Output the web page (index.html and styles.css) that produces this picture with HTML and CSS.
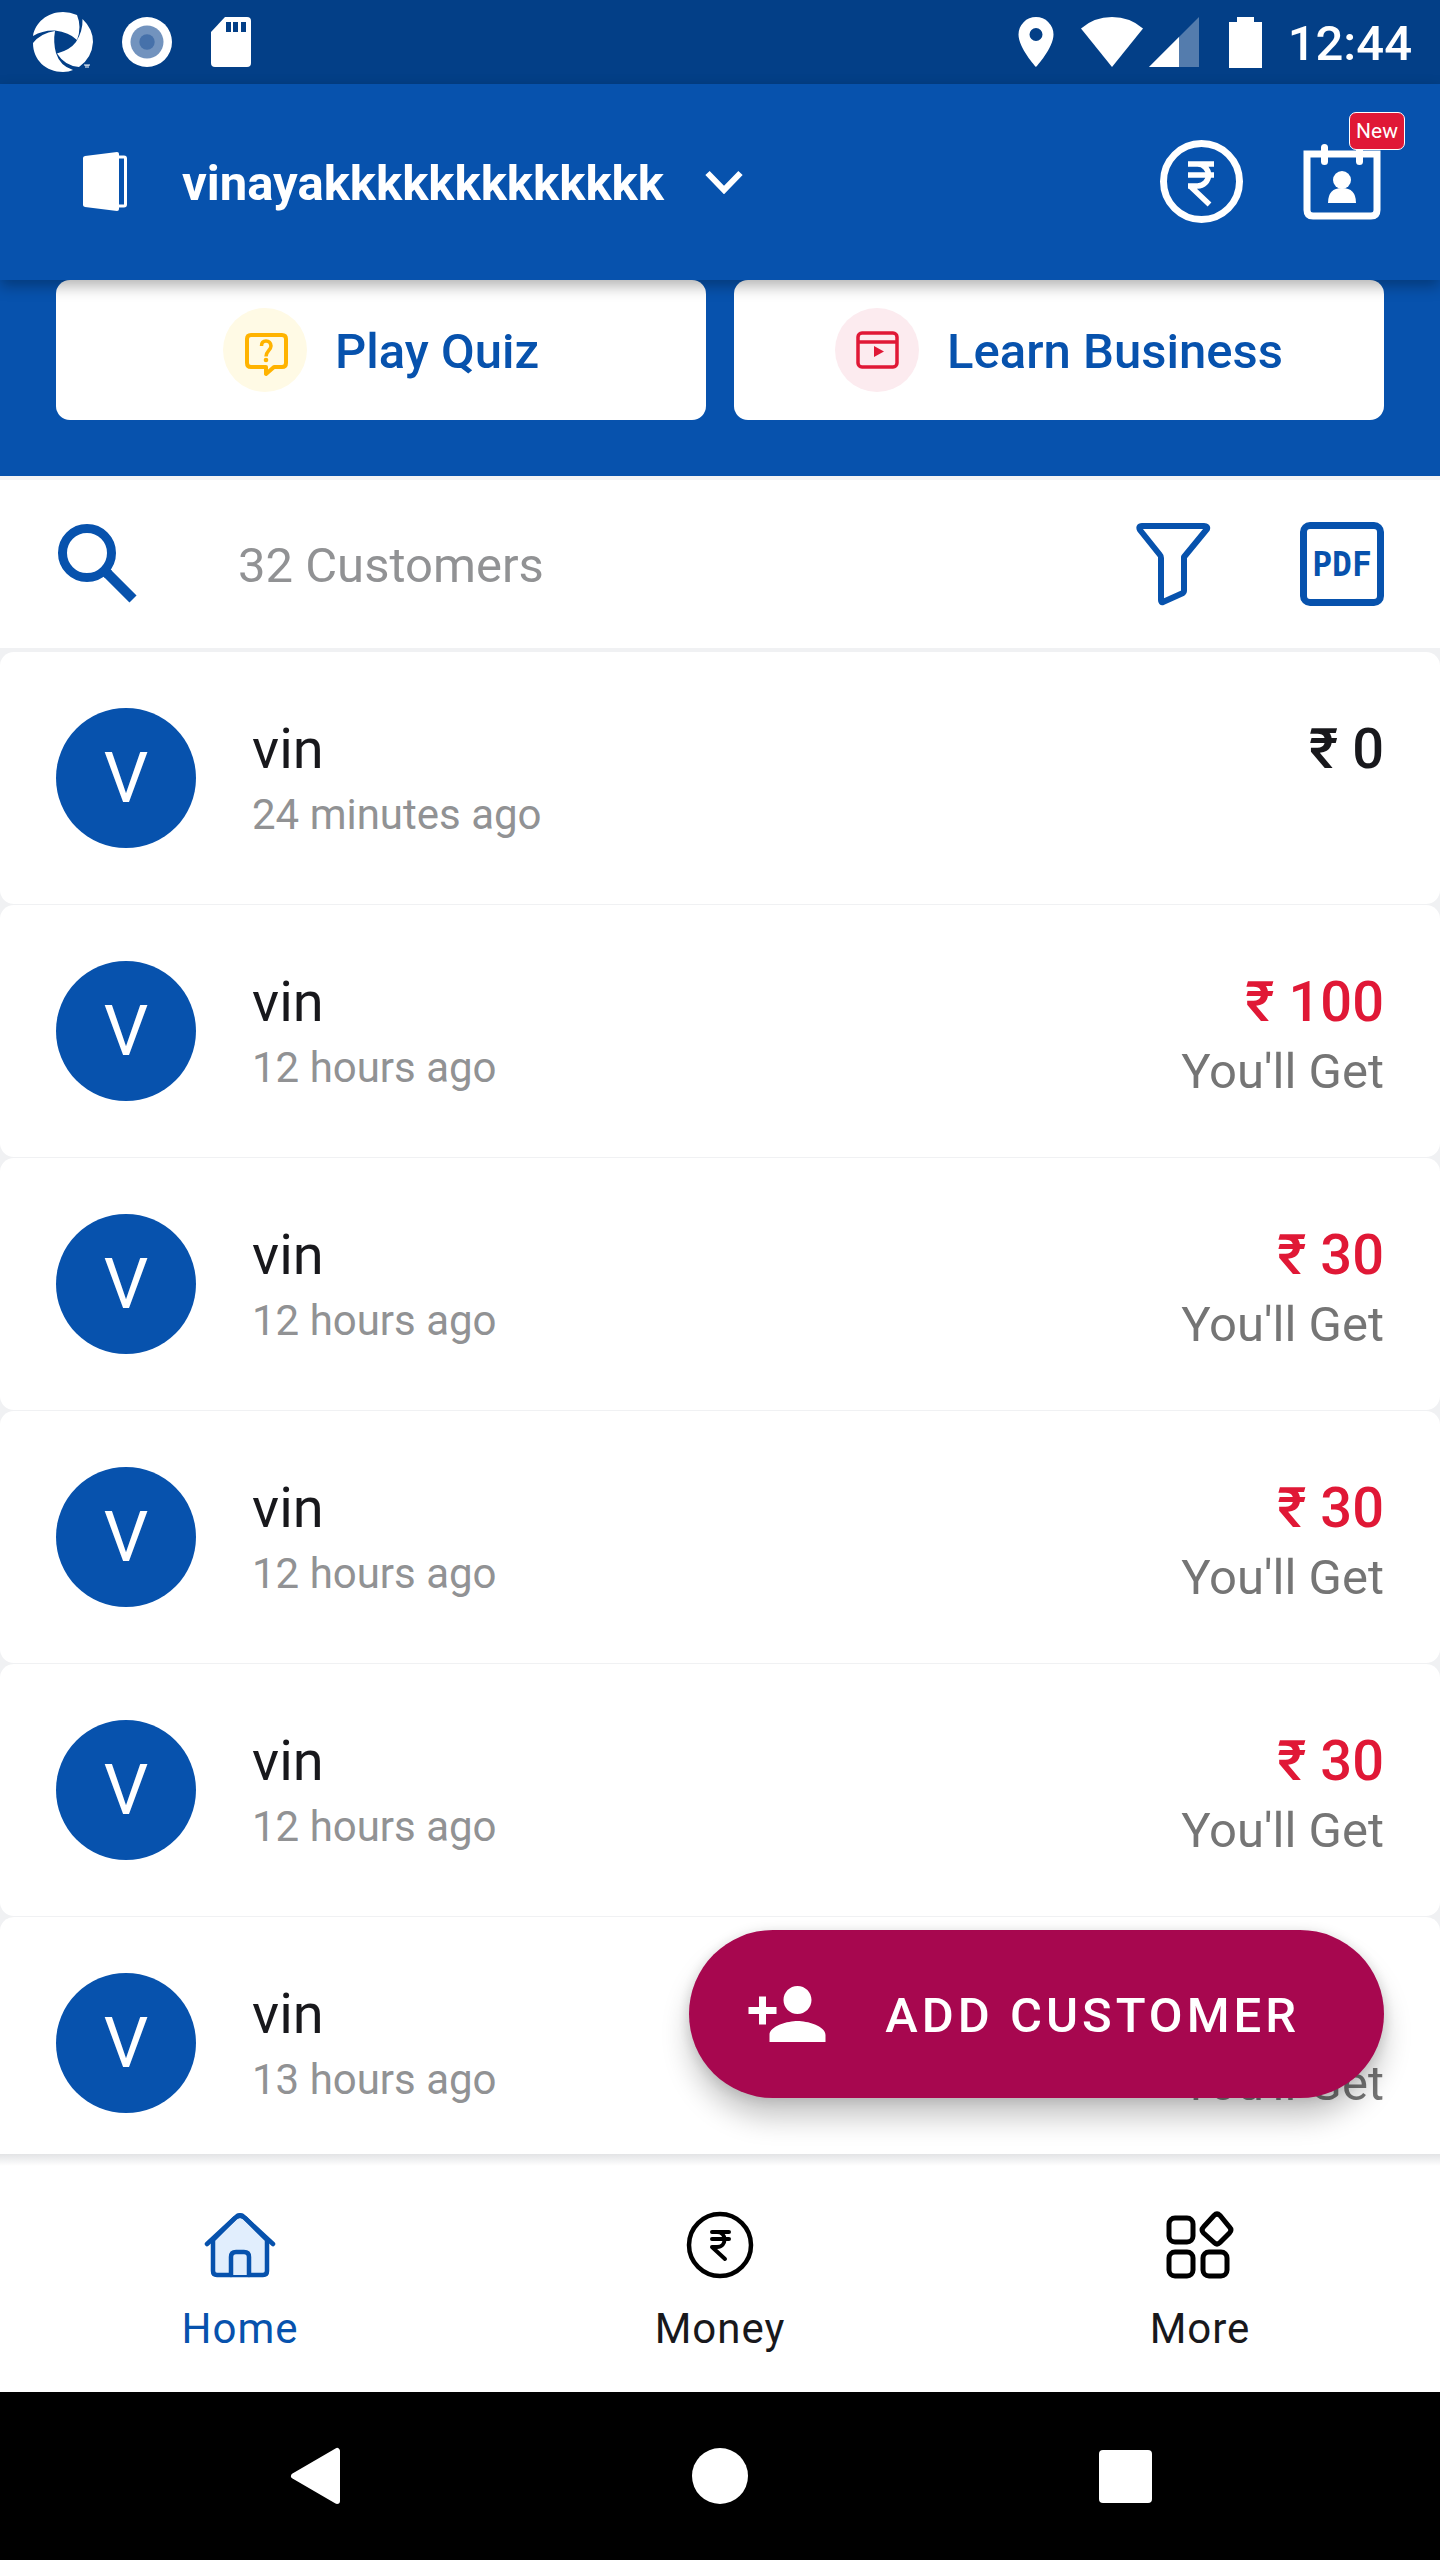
FILE: index.html
```html
<!DOCTYPE html>
<html lang="en">
<head>
<meta charset="utf-8">
<meta name="viewport" content="width=device-width, initial-scale=1">
<title>Customers</title>
<link rel="stylesheet" href="styles.css">
</head>
<body>
<div class="screen">
  <div class="status-bar">
    <div class="status-left">
      <svg width="60" height="60" viewBox="0 0 60 60" fill="#fff"><path d="M0 24Q10 18 22 18.500Q36 20 44 28Q49 15 44 3Q37 0 30 0C14 0 2 11 0 24Z"/><path d="M49.500 7Q60 17 60 30Q59 46 46 55Q32 54 24 41.500Q37 38 43 30Q50 19 49.500 7Z"/><path d="M22 19Q8 21 0 31C0 48 13 60 30 60Q36 60 40 58Q27 54 23 41Q20 30 22 19Z"/><path d="M51 53h6M53 53v3M55 56v-3" stroke="#fff" fill="none"/></svg>
      <svg width="50" height="50" viewBox="0 0 50 50"><circle cx="25" cy="25" r="25" fill="#fff"/><circle cx="25" cy="25" r="16.500" fill="#7293be"/><circle cx="25" cy="25" r="7.700" fill="#4671aa"/></svg>
      <svg width="40" height="50" viewBox="0 0 40 50"><path d="M14 0H36Q40 0 40 4V46Q40 50 36 50H4Q0 50 0 46V15Z" fill="#fff"/><path d="M15 5h5v10h-5zM22 5h5v10h-5zM30 5h5v10h-5z" fill="#033f87"/></svg>
    </div>
    <div class="status-right">
      <svg width="36" height="50" viewBox="0 0 36 50"><path fill="#fff" fill-rule="evenodd" d="M18 0A17.500 17.500 0 0 0 .5 17.500C.5 31 18 50 18 50S35.500 31 35.500 17.500A17.500 17.500 0 0 0 18 0ZM18 11a6.500 6.500 0 1 1 0 13a6.500 6.500 0 0 1 0-13Z"/></svg>
      <svg class="wifi" width="62" height="50" viewBox="0 0 62 50"><path fill="#fff" d="M0 11.500Q13 0 31 0T62 11.500L31 50Z"/></svg>
      <svg class="signal" width="50" height="50" viewBox="0 0 50 50"><path fill="#fff" fill-opacity=".32" d="M50 0V50H0Z"/><path fill="#fff" d="M30 20V50H0Z"/></svg>
      <svg class="battery" width="33" height="51" viewBox="0 0 33 51"><path fill="#fff" d="M8 0H25V5H33V51H0V5H8Z"/></svg>
      <span class="clock label">12:44</span>
    </div>
  </div>

  <header class="app-bar">
    <button class="book-switch" type="button">
      <svg width="44" height="60" viewBox="0 0 44 60"><path fill="#fff" d="M0 6Q0 4.500 2 4L34 0Q36 0 36 2V57Q36 59 34 59L2 55Q0 54.500 0 53Z"/><path fill="none" stroke="#fff" stroke-width="3" d="M35 5h6q1.500 0 1.500 1.500v46q0 1.500-1.500 1.500h-6"/></svg>
      <span class="label">vinayakkkkkkkkkkkkk</span>
      <svg width="38" height="24" viewBox="0 0 38 24"><path fill="none" stroke="#fff" stroke-width="6" d="M2.500 3L19 20L35.500 3"/></svg>
    </button>
    <div class="app-actions">
      <button type="button" aria-label="Payments">
        <svg width="84" height="84" viewBox="0 0 84 84" fill="none" stroke="#fff"><circle cx="41.500" cy="41.500" r="38" stroke-width="7"/><path stroke-width="5.500" d="M28 24h26M28 35h26M28 46h9.500a11 11 0 0 0 0-22M30 46L49.500 64.500"/></svg>
      </button>
      <button class="calendar" type="button" aria-label="Staff attendance">
        <svg width="84" height="84" viewBox="0 0 84 84"><path fill="none" stroke="#fff" stroke-width="7" d="M7 14H77V70q0 6-6 6H13q-6 0-6-6Z"/><path fill="none" stroke="#fff" stroke-width="7" stroke-linecap="round" d="M24.500 7.500v14M59.500 7.500v14"/><circle cx="42" cy="40" r="9" fill="#fff"/><path fill="#fff" d="M28 63Q28 48 42 48T56 63Z"/></svg>
        <span class="badge">New</span>
      </button>
    </div>
  </header>

  <div class="shortcuts">
    <button type="button">
      <svg width="84" height="84" viewBox="0 0 84 84"><circle cx="42" cy="42" r="42" fill="#fffae5"/><path fill="none" stroke="#ffb300" stroke-width="4" stroke-linejoin="round" d="M28 27H59q4 0 4 4V55q0 4-4 4H51l-8 7v-7H28q-4 0-4-4V31q0-4 4-4Z"/><path fill="none" stroke="#ffb300" stroke-width="3.500" d="M38.500 38q0-5 4.500-5t5 5c0 4-5 5-5 10.500"/><circle cx="43" cy="52" r="2.300" fill="#ffb300"/></svg>
      <span class="label">Play Quiz</span>
    </button>
    <button type="button">
      <svg width="84" height="84" viewBox="0 0 84 84"><circle cx="42" cy="42" r="42" fill="#fcebef"/><rect x="23" y="25" width="39" height="34" rx="4" fill="none" stroke="#e01836" stroke-width="3.500"/><path d="M23 34H62" stroke="#e01836" stroke-width="3.500"/><path fill="#e01836" d="M39 38l10 5.500-10 5.500Z"/></svg>
      <span class="label">Learn Business</span>
    </button>
  </div>

  <main class="content">
    <div class="search-row">
      <label for="search"><svg width="84" height="84" viewBox="0 0 84 84" fill="none" stroke="#0752ad"><circle cx="31" cy="31" r="24.500" stroke-width="9"/><path stroke-width="10" d="M48.500 48.500l4 4"/><path stroke-width="10" d="M51 51L77 77"/></svg></label>
      <input class="label" id="search" type="text" placeholder="32 Customers" aria-label="Search customers">
      <button type="button" aria-label="Filter"><svg width="84" height="84" viewBox="0 0 84 84"><path fill="none" stroke="#0752ad" stroke-width="6" stroke-linejoin="round" d="M10 4H72q4 0 3 3L52 35V69q0 1-1 2L31 80q-2 1-2-2V36q0-2-1-3L8 8Q6 4 10 4Z"/></svg></button>
      <button class="pdf" type="button">PDF</button>
    </div>

    <ul class="customers">
      <li><span class="avatar">V</span><div class="who"><span class="name">vin</span><span class="time">24 minutes ago</span></div><div class="due"><span class="amount">₹ 0</span></div></li>
      <li><span class="avatar">V</span><div class="who"><span class="name">vin</span><span class="time">12 hours ago</span></div><div class="due"><span class="amount get">₹ 100</span><span class="note">You'll Get</span></div></li>
      <li><span class="avatar">V</span><div class="who"><span class="name">vin</span><span class="time">12 hours ago</span></div><div class="due"><span class="amount get">₹ 30</span><span class="note">You'll Get</span></div></li>
      <li><span class="avatar">V</span><div class="who"><span class="name">vin</span><span class="time">12 hours ago</span></div><div class="due"><span class="amount get">₹ 30</span><span class="note">You'll Get</span></div></li>
      <li><span class="avatar">V</span><div class="who"><span class="name">vin</span><span class="time">12 hours ago</span></div><div class="due"><span class="amount get">₹ 30</span><span class="note">You'll Get</span></div></li>
      <li><span class="avatar">V</span><div class="who"><span class="name">vin</span><span class="time">13 hours ago</span></div><div class="due"><span class="amount get"></span><span class="note">You'll Get</span></div></li>
    </ul>

    <button class="add-customer" type="button">
      <svg width="84" height="84" viewBox="0 0 24 24" fill="#fff"><path d="M15 12c2.210 0 4-1.790 4-4s-1.790-4-4-4-4 1.790-4 4 1.790 4 4 4zm-9-2V7H4v3H1v2h3v3h2v-3h3v-2H6zm9 4c-2.670 0-8 1.340-8 4v2h16v-2c0-2.660-5.330-4-8-4z"/></svg>
      <span class="label">ADD CUSTOMER</span>
    </button>
  </main>

  <nav class="tabs">
    <a class="active" href="#home">
      <svg width="84" height="84" viewBox="0 0 84 84" stroke="#0752ad" stroke-width="4.500" stroke-linecap="round" stroke-linejoin="round"><path fill="#e1eefd" d="M15 37V68q0 4 4 4H65q4 0 4-4V37L47 15q-5-5-10 0Z"/><path fill="none" d="M9 41L37 15q5-5 10 0L75 41"/><path fill="#e1eefd" d="M33 72V54q0-5 5-5h8q5 0 5 5V72"/></svg>
      <span>Home</span>
    </a>
    <a href="#money">
      <svg width="84" height="84" viewBox="0 0 84 84" fill="none" stroke="#000"><circle cx="42" cy="42" r="31" stroke-width="4.500"/><path stroke-width="4" stroke-linecap="round" stroke-linejoin="round" d="M34 29h17M34 36h17M39 29c10 0 10 15 0 15h-5L47 56"/></svg>
      <span>Money</span>
    </a>
    <a href="#more">
      <svg width="84" height="84" viewBox="0 0 84 84" fill="none" stroke="#000" stroke-width="5"><rect x="11" y="15" width="24" height="24" rx="6"/><rect x="11" y="49" width="24" height="24" rx="6"/><rect x="45" y="49" width="24" height="24" rx="6"/><path d="M56 12.500q3-3 6 0L71.500 24q3 3 0 6L62 39.500q-3 3-6 0L45.500 30q-3-3 0-6Z"/></svg>
      <span>More</span>
    </a>
  </nav>

  <div class="system-nav">
    <button type="button" aria-label="Back"><svg width="56" height="60" viewBox="0 0 56 60"><path fill="#fff" stroke="#fff" stroke-width="6" stroke-linejoin="round" d="M50 5V55L7 30Z"/></svg></button>
    <button type="button" aria-label="Home screen"><svg width="56" height="56" viewBox="0 0 56 56"><circle cx="28" cy="28" r="28" fill="#fff"/></svg></button>
    <button type="button" aria-label="Recent apps"><svg width="53" height="53" viewBox="0 0 53 53"><rect width="53" height="53" rx="4" fill="#fff"/></svg></button>
  </div>
</div>
</body>
</html>
```
FILE: styles.css
```css
* {
  box-sizing: border-box;
}

body {
  margin: 0;
  font-family: Roboto, "Noto Sans", sans-serif;
  color: #18181c;
}

svg {
  display: block;
  flex: none;
}

button {
  margin: 0;
  padding: 0;
  border: 0;
  background: none;
  font: inherit;
  color: inherit;
  cursor: pointer;
}

/* Optical centring of text that sits beside an icon */
.label {
  padding-top: 3px;
}

.screen {
  display: flex;
  flex-direction: column;
  height: 100vh;
  background: #fff;
}

/* Status bar */

.status-bar {
  display: flex;
  flex: none;
  align-items: center;
  justify-content: space-between;
  height: 84px;
  padding: 0 28px 0 33px;
  background: #033f87;
  color: #fff;
}

.status-left,
.status-right {
  display: flex;
  align-items: center;
}

.status-left {
  gap: 29px;
}

.status-left svg:last-child {
  margin-left: 10px;
}

.wifi {
  margin-left: 27px;
}

.signal {
  margin-left: 6px;
}

.battery {
  margin-left: 30px;
}

.clock {
  margin-left: 26px;
  font-size: 49px;
  font-weight: 500;
}

/* App bar */

.app-bar {
  position: relative;
  z-index: 1;
  display: flex;
  flex: none;
  align-items: center;
  justify-content: space-between;
  height: 196px;
  padding: 0 56px 0 83px;
  background: #0752ad;
  color: #fff;
  box-shadow: 0 6px 14px rgba(0, 0, 0, 0.3);
}

.book-switch {
  display: flex;
  align-items: center;
  font-size: 49px;
  font-weight: 700;
}

.book-switch span {
  margin: 0 41px 0 55px;
}

.app-actions {
  display: flex;
  gap: 56px;
}

.calendar {
  position: relative;
}

.badge {
  position: absolute;
  top: -28px;
  right: -21px;
  padding: 0 6px;
  border: 1px solid #fff;
  border-radius: 7px;
  background: #e01836;
  font-size: 21px;
  line-height: 36px;
}

/* Shortcuts */

.shortcuts {
  display: grid;
  flex: none;
  grid-template-columns: 1fr 1fr;
  gap: 28px;
  padding: 0 56px 56px;
  background: #0752ad;
}

.shortcuts button {
  display: flex;
  align-items: center;
  justify-content: center;
  gap: 28px;
  height: 140px;
  border-radius: 14px;
  background: #fff;
  color: #0752ad;
  font-size: 49px;
  font-weight: 500;
}

/* Search row */

.content {
  position: relative;
  display: flex;
  flex: 1;
  flex-direction: column;
  min-height: 0;
  overflow: hidden;
}

.search-row {
  display: flex;
  flex: none;
  align-items: center;
  gap: 84px;
  padding: 42px 56px;
  border-top: 4px solid #f4f4f5;
}

.search-row input {
  flex: 1;
  min-width: 0;
  margin: 0;
  padding: 3px 0 0 14px;
  border: 0;
  outline: 0;
  background: none;
  color: #18181c;
  font: inherit;
  font-size: 49px;
}

.search-row input::placeholder {
  color: #919294;
  opacity: 1;
}

.search-row .pdf {
  display: flex;
  align-items: center;
  justify-content: center;
  width: 84px;
  height: 84px;
  border: 7px solid #0752ad;
  border-radius: 10px;
  color: #0752ad;
  font-family: "DejaVu Sans Mono", monospace;
  font-size: 33px;
  font-weight: 700;
}

/* Customer list */

.customers {
  display: flex;
  flex: 1;
  flex-direction: column;
  gap: 1px;
  min-height: 0;
  margin: 0;
  padding: 4px 0 0;
  overflow: hidden auto;
  scrollbar-width: none;
  background: #f0f1f3;
  list-style: none;
}

.customers li {
  display: flex;
  flex: none;
  align-items: flex-start;
  padding: 56px;
  border-radius: 14px;
  background: #fff;
}

.avatar {
  width: 140px;
  border-radius: 50%;
  background: #0752ad;
  color: #fff;
  font-size: 70px;
  line-height: 140px;
  text-align: center;
}

.who,
.due {
  display: flex;
  flex-direction: column;
  gap: 8px;
  padding-top: 8px;
}

.who {
  flex: 1;
  padding-left: 56px;
}

.due {
  align-items: flex-end;
}

.name,
.amount {
  min-height: 66px;
  font-size: 56px;
  line-height: 66px;
}

.amount {
  font-weight: 500;
}

.get {
  color: #e01836;
}

.time {
  color: #919294;
  font-size: 42px;
  line-height: 50px;
}

.note {
  color: #757575;
  font-size: 49px;
  line-height: 58px;
}

.add-customer {
  position: absolute;
  right: 56px;
  bottom: 56px;
  display: flex;
  align-items: center;
  gap: 56px;
  height: 168px;
  padding: 0 84px 0 56px;
  border-radius: 84px;
  background: #a7074f;
  box-shadow: 0 20px 28px rgba(0, 0, 0, 0.22), 0 2px 14px rgba(0, 0, 0, 0.14);
  color: #fff;
  font-size: 49px;
  font-weight: 500;
  letter-spacing: 4px;
}

/* Bottom tabs */

.tabs {
  display: grid;
  flex: none;
  grid-template-columns: repeat(3, 1fr);
  padding: 49px 0 38px;
  background: linear-gradient(#e2e3e5, #fff 12px);
}

.tabs a {
  display: flex;
  flex-direction: column;
  align-items: center;
  gap: 17px;
  color: #18181c;
  font-size: 42px;
  line-height: 50px;
  letter-spacing: 1px;
  text-decoration: none;
}

.tabs .active {
  color: #0752ad;
}

/* System navigation */

.system-nav {
  display: grid;
  flex: none;
  grid-template-columns: repeat(3, 1fr);
  align-items: center;
  justify-items: center;
  height: 168px;
  padding: 0 112px;
  background: #000;
}
```
